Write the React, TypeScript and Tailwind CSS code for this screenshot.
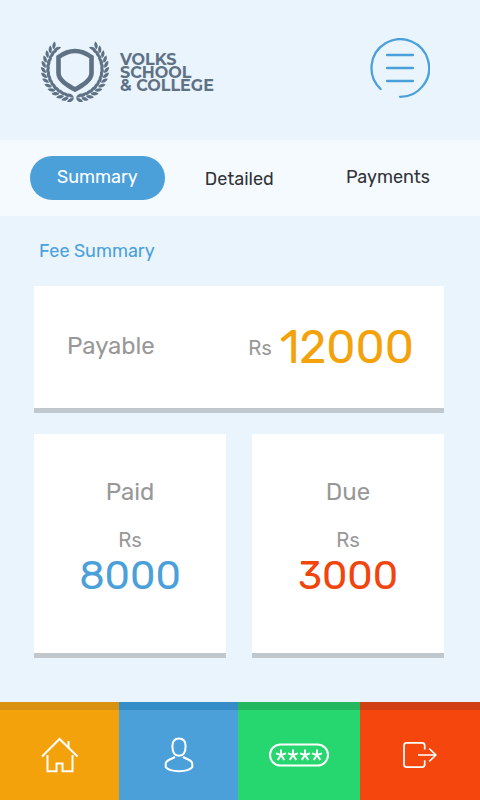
import type { ReactNode } from "react";

// Leaf pairs of one laurel branch, from the bottom of the ring to its open top
const leafAngles = [3, 13, 23, 33, 43, 53, 63, 73, 83, 93, 103, 113, 123, 133];

function LaurelBranch() {
  return (
    <g>
      {leafAngles.map((angle) => (
        <g key={angle} transform={`rotate(${angle}) translate(0 29)`}>
          <path d="M0.4 -0.3C-0.2 -3 -3 -4.6 -6.4 -4C-5.8 -1.4 -2.8 0.4 0.4 -0.3Z" />
          <path d="M0.4 0.3C-0.2 3.2 -2.8 5 -6.2 4.6C-5.8 1.8 -2.8 -0.4 0.4 0.3Z" />
        </g>
      ))}
    </g>
  );
}

function Crest() {
  return (
    <svg viewBox="-35 -31 70 64" className="h-16 w-[70px] shrink-0" fill="#5f7184" aria-hidden="true">
      <LaurelBranch />
      <g transform="scale(-1 1)">
        <LaurelBranch />
      </g>
      <path
        d="M0 -18C6 -18 11 -16 16.5 -12V4C16.5 11 8 16 0 20.5C-8 16 -16.5 11 -16.5 4V-12C-11 -16 -6 -18 0 -18Z"
        fill="none"
        stroke="#5f7184"
        strokeWidth="4.6"
      />
    </svg>
  );
}

function MenuIcon() {
  return (
    <svg
      viewBox="0 0 60 60"
      className="size-[60px]"
      fill="none"
      stroke="#4ba0da"
      strokeWidth="2.3"
      strokeLinecap="round"
      aria-hidden="true"
    >
      <path d="M10.6 51A28.8 28.8 0 1 1 30 58.8" />
      <path d="M17 17H43M17 30H43M17 43H43" />
    </svg>
  );
}

function HomeIcon() {
  return (
    <svg viewBox="0 0 38 36" className="h-9 w-[38px]" fill="none" stroke="white" strokeWidth="2" aria-hidden="true">
      <path d="M1 19.5L18.5 2L36.5 19.5" />
      <path d="M6.5 18V34.2H15.5V26.5H21.5V34.2H31.5V18" />
      <path d="M27.5 11V4" />
    </svg>
  );
}

function UserIcon() {
  return (
    <svg viewBox="0 0 30 36" className="h-9 w-[30px]" fill="none" stroke="white" strokeWidth="2" aria-hidden="true">
      <path d="M15 1.5C19.8 1.5 21.6 4.5 21.6 9C21.6 14.6 19.4 18.8 15 18.8C10.6 18.8 8.4 14.6 8.4 9C8.4 4.5 10.2 1.5 15 1.5Z" />
      <path d="M11 20L4.8 23C2.4 24.2 1.7 25 1.7 27V30.2C4 33 9.4 34.2 15 34.2S26 33 28.3 30.2V27C28.3 25 27.6 24.2 25.2 23L19 20" />
    </svg>
  );
}

function PasswordIcon() {
  return (
    <svg viewBox="0 0 60 24" className="h-6 w-[60px]" fill="none" stroke="white" strokeWidth="2" aria-hidden="true">
      <rect x="1" y="1.5" width="58" height="21" rx="10.5" />
      {[12, 24, 36, 48].map((x) => (
        <path
          key={x}
          transform={`translate(${x} 12)`}
          d="M0 0V-5.6M0 0L5 -1.6M0 0L3.3 5M0 0L-3.3 5M0 0L-5 -1.6"
        />
      ))}
    </svg>
  );
}

function LogoutIcon() {
  return (
    <svg viewBox="0 0 34 28" className="h-7 w-[34px]" fill="none" stroke="white" strokeWidth="1.7" aria-hidden="true">
      <path d="M21.7 8.6V4.4Q21.7 1.8 19.1 1.8H3.6Q1 1.8 1 4.4V23.6Q1 26.2 3.6 26.2H19.1Q21.7 26.2 21.7 23.6V19.2" />
      <path d="M15 14H32.6M26.2 7.5L32.8 14L26.2 20.5" />
    </svg>
  );
}

function BalanceCard({ label, amount, color }: { label: string; amount: string; color: string }) {
  return (
    <section className="border-b-[5px] border-[#c0c8ce] bg-white pt-10 pb-[55px] text-center">
      <h2 className="text-2xl leading-9 text-[#989898]">{label}</h2>
      <p className="pt-4 text-xl leading-7 text-[#989898]">Rs</p>
      <p className={`text-[40px] leading-[44px] ${color}`}>{amount}</p>
    </section>
  );
}

function NavButton({ label, className, children }: { label: string; className: string; children: ReactNode }) {
  return (
    <button type="button" aria-label={label} className={`flex items-center justify-center border-t-8 ${className}`}>
      {children}
    </button>
  );
}

export default function App() {
  return (
    <div className="flex min-h-screen flex-col bg-[#e9f4fd] font-['Rubik',Inter,sans-serif]">
      <header className="flex items-start justify-between px-10 py-[38px]">
        <div className="flex items-center gap-[10px]">
          <Crest />
          <h1 className="pt-1 font-['Montserrat',Inter,sans-serif] text-base leading-[13px] font-bold text-[#5f7184]">
            VOLKS
            <br />
            SCHOOL
            <br />
            &amp; COLLEGE
          </h1>
        </div>
        <button type="button" aria-label="Menu" className="mr-[10px]">
          <MenuIcon />
        </button>
      </header>

      <nav className="flex items-center bg-[#f5fafe] py-4 pr-[50px] pl-[30px] text-lg text-[#303338]">
        <button type="button" className="mr-10 h-11 rounded-full bg-[#4ba0da] px-[27px] pb-0.5 text-white">
          Summary
        </button>
        <button type="button" className="pt-0.5">
          Detailed
        </button>
        <button type="button" className="ml-auto pb-0.5">
          Payments
        </button>
      </nav>

      <main className="pr-9 pb-11 pl-[34px]">
        <p className="px-[5px] py-[21px] text-lg leading-7 text-[#4ba0da]">Fee Summary</p>
        <section className="flex items-center justify-between border-b-[5px] border-[#c0c8ce] bg-white pt-[30px] pr-[30px] pb-7 pl-[33px]">
          <h2 className="pb-1 text-2xl text-[#989898]">Payable</h2>
          <p className="flex items-center gap-2">
            <span className="text-xl text-[#989898]">Rs</span>
            <span className="text-[46px] leading-16 text-[#f3a20c]">12000</span>
          </p>
        </section>
        <div className="grid grid-cols-2 gap-[26px] pt-[21px]">
          <BalanceCard label="Paid" amount="8000" color="text-[#4ba0da]" />
          <BalanceCard label="Due" amount="3000" color="text-[#f2450d]" />
        </div>
      </main>

      <nav className="mt-auto grid h-[98px] grid-cols-[119fr_119fr_122fr_120fr]">
        <NavButton label="Home" className="border-[#d9920f] bg-[#f3a20c]">
          <HomeIcon />
        </NavButton>
        <NavButton label="Profile" className="border-[#358dc8] bg-[#4ba0da]">
          <UserIcon />
        </NavButton>
        <NavButton label="Change password" className="border-[#25b75f] bg-[#26d66e]">
          <PasswordIcon />
        </NavButton>
        <NavButton label="Log out" className="border-[#d14012] bg-[#f5470d]">
          <LogoutIcon />
        </NavButton>
      </nav>
    </div>
  );
}
